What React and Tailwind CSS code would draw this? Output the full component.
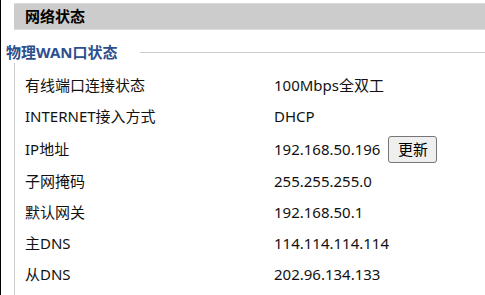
import React from "react";

const rows = [
  ["有线端口连接状态", "100Mbps全双工"],
  ["INTERNET接入方式", "DHCP"],
  ["IP地址", "192.168.50.196", true],
  ["子网掩码", "255.255.255.0"],
  ["默认网关", "192.168.50.1"],
  ["主DNS", "114.114.114.114"],
  ["从DNS", "202.96.134.133"],
];

export default function App() {
  return (
    <div
      className="w-[485px] h-[295px] overflow-hidden bg-white border-l border-black text-[15px] text-[#111]"
      style={{ fontFamily: '"Noto Sans", "Noto Sans CJK SC", sans-serif' }}
    >
      <div className="mt-[3px] ml-[13px] h-[27px] bg-[#cccccc] border-t border-[#dcdcdc] border-b border-[#999999] flex items-center pl-[11px]">
        <span className="font-bold text-black leading-none">网络状态</span>
      </div>
      <div className="mt-[11px] h-[22px] flex items-center">
        <span className="w-[139px] pl-[5px] font-bold text-[#2d4f8e] leading-none whitespace-nowrap">物理WAN口状态</span>
        <div className="flex-1 h-px bg-[#cccccc]" />
      </div>
      <div className="ml-[13px] border-l border-[#cccccc] pl-[10px] pt-[7px] h-[240px]">
        {rows.map(([label, value, btn]) => (
          <div key={label} className={`flex items-center ${btn ? "h-[34px]" : "h-[31px]"}`}>
            <div className="w-[249px] leading-none whitespace-nowrap">{label}</div>
            <div className="flex items-center leading-none whitespace-nowrap">
              <span>{value}</span>
              {btn && (
                <button className="ml-[8px] w-[49px] h-[27px] bg-[#efefef] border border-[#767676] rounded-[3px] text-[15px] text-black leading-none">
                  更新
                </button>
              )}
            </div>
          </div>
        ))}
      </div>
    </div>
  );
}
